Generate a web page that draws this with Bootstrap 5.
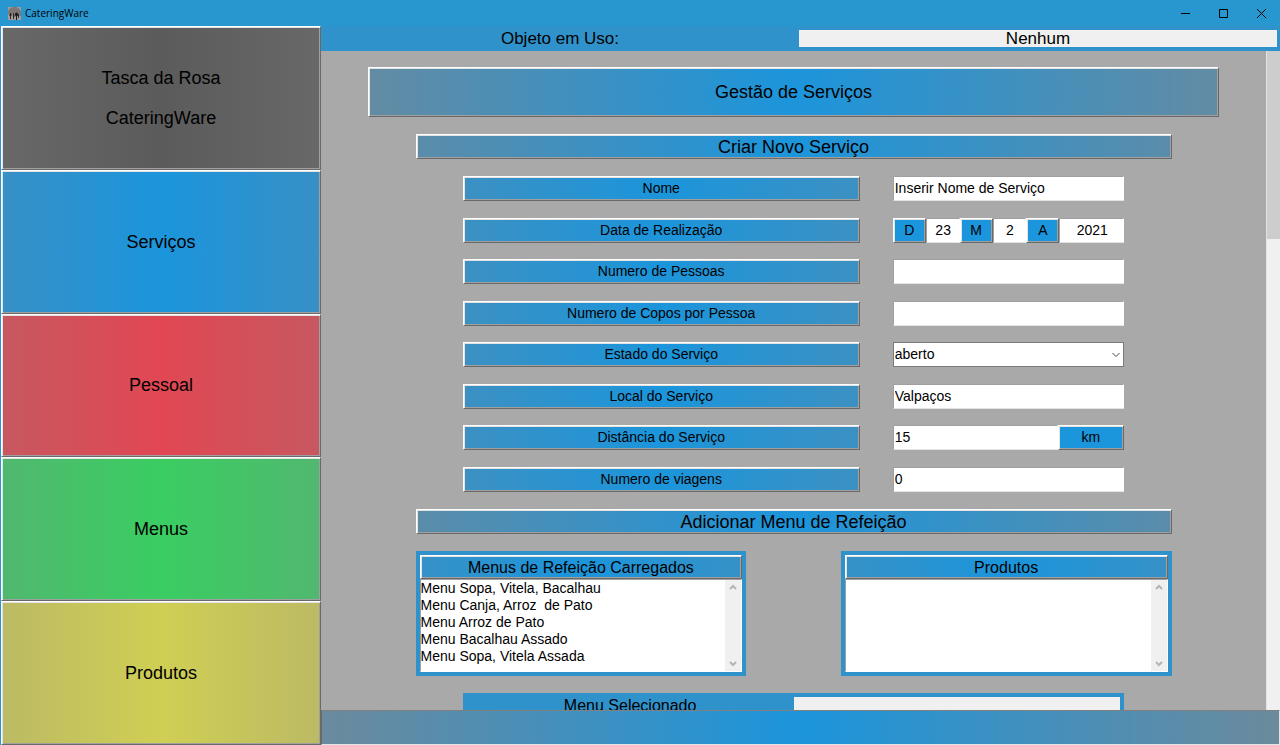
<!DOCTYPE html>
<html lang="pt">
<head>
<meta charset="utf-8">
<meta name="viewport" content="width=device-width, initial-scale=1">
<title>CateringWare</title>
<link rel="stylesheet" href="https://cdn.jsdelivr.net/npm/bootstrap@5.3.0/dist/css/bootstrap.min.css">
<style>
  :root {
    --panel: #3092cb;
    --blue: #1b95dc;
    --fade: radial-gradient(circle 480px at center, #1b95dc, #6c8a9c);
  }
  body { font-family: "Liberation Sans", Arial, sans-serif; font-size: 14px; line-height: 17px; color: #000; background: #a9a9a9; }
  .titlebar { height: 26px; background: #2997cf; padding-left: 8px; font: 10px/26px "Open Sans", sans-serif; }
  .titlebar svg { display: block; }
  .winbtn { width: 38px; height: 26px; border: 0; padding: 0; background: none; display: flex; align-items: center; justify-content: center; }
  .sidebar { flex: 0 0 321px; flex-basis: calc(25% + 1px); padding-left: 1px; background: #2997cf; }
  .raised {
    border: 1px solid; border-color: #fff #696969 #696969 #fff;
    box-shadow: inset 1px 1px #e3e3e3, inset -1px -1px #a0a0a0;
    display: flex; align-items: center; justify-content: center; text-align: center;
    border-radius: 0; padding: 0; color: #000;
  }
  .big { font-size: 18px; line-height: 20px; }
  .medium { font-size: 17px; line-height: 18px; }
  .caption-text { font-size: 16px; line-height: 17px; }
  .side-item { flex: 1 1 0; background: linear-gradient(90deg, var(--edge), var(--mid), var(--edge)); }
  .t-grey { --mid: #5b5b5b; --edge: #686868; }
  .t-blue { --mid: #1b95dc; --edge: #3790c6; }
  .t-red { --mid: #e14753; --edge: #c75860; }
  .t-green { --mid: #3acd62; --edge: #51b86f; }
  .t-yellow { --mid: #cfcf54; --edge: #bcba64; }
  .usebar { height: 25px; background: var(--panel); padding: 4px 3px 4px 0; }
  .readout { background: #f0f0f0; border: 0; border-radius: 0; padding: 0; min-width: 0; text-align: center; color: #000; }
  .canvas { padding-top: 16px; min-width: 0; overflow: hidden; }
  .stack { display: flex; flex-direction: column; align-items: center; gap: 17px; flex: none; }
  .faded { background: var(--fade); }
  .page-title { width: 90%; height: 50px; }
  .section-title { width: 80%; height: 25px; }
  .form-area { width: 70%; min-height: 316px; display: flex; flex-direction: column; justify-content: space-between; }
  .form-line { display: flex; justify-content: space-between; }
  .form-line > .raised { width: 60%; height: 25px; }
  .field-box { width: 35%; height: 25px; display: flex; }
  .entry {
    border: 1px solid; border-color: #a0a0a0 #fff #e3e3e3 #a0a0a0; border-radius: 0;
    background: #fff; color: #000; padding: 0 0 1px 1px; min-width: 0; width: 100%; height: 25px;
    flex: 1 1 0; outline: 0; font-size: 14px; line-height: 17px;
  }
  .pick { border-color: #7a7a7a; appearance: none; }
  .unit { flex: 1 1 0; background: var(--blue); min-width: 0; }
  .w-two { flex-grow: 2; }
  .w-five { flex-grow: 5; }
  .lists { width: 80%; display: flex; justify-content: space-between; }
  .list-frame { width: 43.75%; background: var(--panel); padding: 4px; }
  .list-frame .raised { height: 24px; }
  .list-box { height: 93px; background: #fff; display: flex; border: 1px solid; border-color: #a0a0a0 #fff #fff #a0a0a0; }
  .list-box ul { white-space: pre; }
  .rail { width: 16px; background: #f0f0f0; padding: 4px 0; display: flex; flex-direction: column; align-items: center; justify-content: space-between; }
  .selected { width: 70%; height: 33px; background: var(--panel); padding: 4px; }
  .page-rail { flex: 0 0 14px; background: #f0f0f0; border-left: 1px solid #e3e3e3; }
  .page-thumb { height: calc(28% + 3px); background: #cdcdcd; }
  .statusbar { height: 35px; border: 1px solid; border-color: #808080 #e3e3e3 #e3e3e3 #696969; }
</style>
</head>
<body>
<div class="vh-100 d-flex flex-column overflow-hidden">
  <header class="titlebar d-flex align-items-center flex-shrink-0">
    <svg width="13" height="13" viewBox="0 0 13 13" aria-hidden="true">
      <rect width="13" height="13" fill="#a39c98"/>
      <path d="M0 7V4Q2 0 6 0h2q4 1 5 5v4z" fill="#7d7775"/>
      <path d="M2.500 6v6M5.500 6v6M10.500 7v4" stroke="#302c2b"/>
      <ellipse cx="8.500" cy="7.500" rx="1.500" ry="2" fill="#1d1a1a"/>
      <path d="M8.500 8v5M1 8h3M5 9h2" stroke="#1d1a1a"/>
    </svg>
    <span class="ms-1 me-auto">CateringWare</span>
    <button class="winbtn" aria-label="Minimizar"><svg width="9" height="9"><path d="M0 4.500h9" stroke="#000"/></svg></button>
    <button class="winbtn" aria-label="Maximizar"><svg width="9" height="9"><path d="M.5.5h8v8h-8z" fill="none" stroke="#000"/></svg></button>
    <button class="winbtn" aria-label="Fechar"><svg width="9" height="9"><path d="M0 0l9 9M9 0L0 9" stroke="#000"/></svg></button>
  </header>

  <div class="d-flex flex-fill overflow-hidden">
    <nav class="sidebar d-flex flex-column big">
      <div class="side-item raised t-grey">Tasca da Rosa<br><br>CateringWare</div>
      <button class="side-item raised t-blue">Serviços</button>
      <button class="side-item raised t-red">Pessoal</button>
      <button class="side-item raised t-green">Menus</button>
      <button class="side-item raised t-yellow">Produtos</button>
    </nav>

    <div class="d-flex flex-column flex-fill overflow-hidden">
      <div class="usebar d-flex flex-shrink-0 medium">
        <label class="w-50 text-center" for="em-uso">Objeto em Uso:</label>
        <input class="readout w-50" id="em-uso" value="Nenhum" readonly>
      </div>

      <div class="d-flex flex-fill overflow-hidden">
        <main class="canvas flex-fill">
          <div class="stack">
            <h1 class="page-title raised faded big fw-normal m-0">Gestão de Serviços</h1>
            <h2 class="section-title raised faded big fw-normal m-0">Criar Novo Serviço</h2>

            <form class="form-area">
              <div class="form-line">
                <label class="raised faded" for="nome">Nome</label>
                <div class="field-box"><input class="entry" id="nome" value="Inserir Nome de Serviço"></div>
              </div>
              <div class="form-line">
                <label class="raised faded" for="dia">Data de Realização</label>
                <div class="field-box">
                  <label class="unit raised" for="dia">D</label><input class="entry text-center" id="dia" value="23">
                  <label class="unit raised" for="mes">M</label><input class="entry text-center" id="mes" value="2">
                  <label class="unit raised" for="ano">A</label><input class="entry w-two text-center" id="ano" value="2021">
                </div>
              </div>
              <div class="form-line">
                <label class="raised faded" for="pessoas">Numero de Pessoas</label>
                <div class="field-box"><input class="entry" id="pessoas"></div>
              </div>
              <div class="form-line">
                <label class="raised faded" for="copos">Numero de Copos por Pessoa</label>
                <div class="field-box"><input class="entry" id="copos"></div>
              </div>
              <div class="form-line">
                <label class="raised faded" for="estado">Estado do Serviço</label>
                <div class="field-box position-relative">
                  <select class="entry pick" id="estado"><option>aberto</option></select>
                  <svg class="position-absolute top-50 end-0 translate-middle-y me-1 pe-none" width="8" height="5"><path d="M.5.5L4 4 7.500.5" fill="none" stroke="#444"/></svg>
                </div>
              </div>
              <div class="form-line">
                <label class="raised faded" for="local">Local do Serviço</label>
                <div class="field-box"><input class="entry" id="local" value="Valpaços"></div>
              </div>
              <div class="form-line">
                <label class="raised faded" for="distancia">Distância do Serviço</label>
                <div class="field-box"><input class="entry w-five" id="distancia" value="15"><label class="unit raised w-two" for="distancia">km</label></div>
              </div>
              <div class="form-line">
                <label class="raised faded" for="viagens">Numero de viagens</label>
                <div class="field-box"><input class="entry" id="viagens" value="0"></div>
              </div>
            </form>

            <h2 class="section-title raised faded big fw-normal m-0">Adicionar Menu de Refeição</h2>

            <div class="lists">
              <section class="list-frame">
                <h3 class="raised faded caption-text fw-normal m-0">Menus de Refeição Carregados</h3>
                <div class="list-box">
                  <ul class="list-unstyled m-0 flex-fill"><li>Menu Sopa, Vitela, Bacalhau</li><li>Menu Canja, Arroz  de Pato</li><li>Menu Arroz de Pato</li><li>Menu Bacalhau Assado</li><li>Menu Sopa, Vitela Assada</li></ul>
                  <div class="rail">
                    <svg width="8" height="6"><path d="M1 5l3-3 3 3" fill="none" stroke="#b5b5b5" stroke-width="2"/></svg>
                    <svg width="8" height="6"><path d="M1 1l3 3 3-3" fill="none" stroke="#b5b5b5" stroke-width="2"/></svg>
                  </div>
                </div>
              </section>
              <section class="list-frame">
                <h3 class="raised faded caption-text fw-normal m-0">Produtos</h3>
                <div class="list-box">
                  <ul class="list-unstyled m-0 flex-fill"></ul>
                  <div class="rail">
                    <svg width="8" height="6"><path d="M1 5l3-3 3 3" fill="none" stroke="#b5b5b5" stroke-width="2"/></svg>
                    <svg width="8" height="6"><path d="M1 1l3 3 3-3" fill="none" stroke="#b5b5b5" stroke-width="2"/></svg>
                  </div>
                </div>
              </section>
            </div>

            <div class="selected d-flex caption-text">
              <label class="w-50 text-center" for="menu-sel">Menu Selecionado</label>
              <input class="readout w-50" id="menu-sel" readonly>
            </div>
          </div>
        </main>
        <div class="page-rail"><div class="page-thumb"></div></div>
      </div>

      <footer class="statusbar faded flex-shrink-0"></footer>
    </div>
  </div>
</div>
<script src="https://cdn.jsdelivr.net/npm/bootstrap@5.3.0/dist/js/bootstrap.bundle.min.js"></script>
</body>
</html>
